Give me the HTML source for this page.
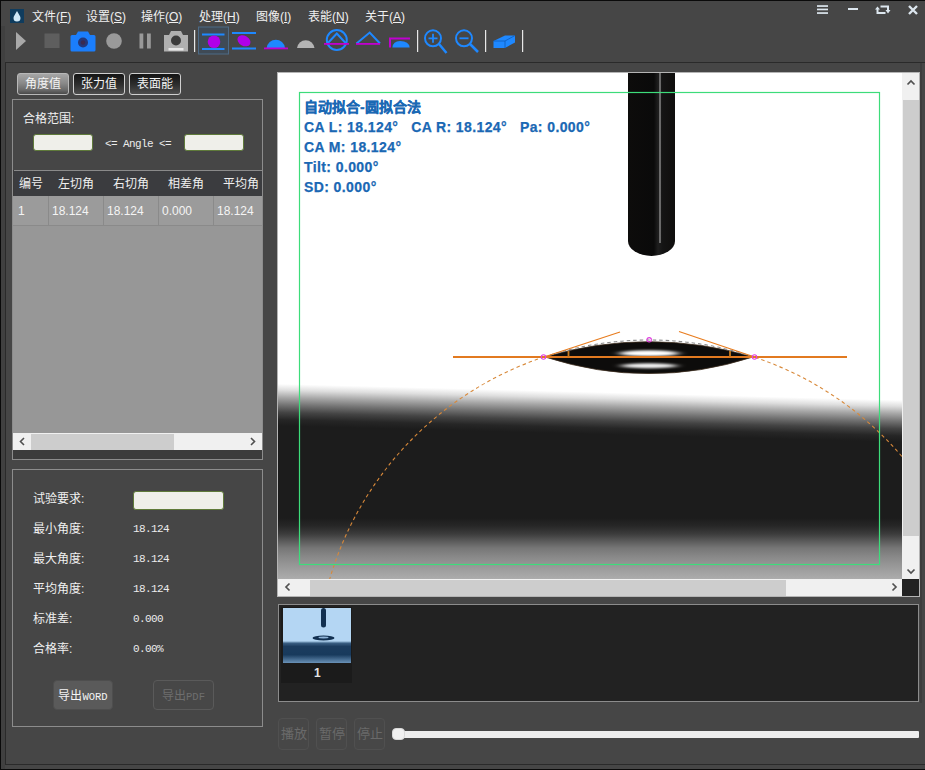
<!DOCTYPE html>
<html lang="zh-CN">
<head>
<meta charset="utf-8">
<style>
*{box-sizing:border-box;margin:0;padding:0}
html,body{width:925px;height:770px;overflow:hidden}
body{position:relative;background:#464646;font-family:"Liberation Sans",sans-serif;color:#e8e8e8;font-size:12px}
.a{position:absolute}
.menu{top:9px;height:16px;line-height:16px;font-size:12px;color:#f0f0f0;white-space:nowrap}
.menu u{text-decoration:underline;text-underline-offset:1px}
.gb{border:1px solid #8c8c8c}
.tab{height:22px;width:52px;border:1px solid #cfcfcf;border-radius:3px;font-size:12px;line-height:20px;text-align:center;color:#f4f4f4;background:linear-gradient(#141414,#2c2c2c 50%,#4e4e4e)}
.tab.sel{background:linear-gradient(#a6a6a6,#8a8a8a 45%,#6a6a6a 80%,#4a4a4a);border-color:#b8b8b8}
.inp{background:#efefea;border:1px solid #5f7a3a;border-radius:3px}
.mono{font-family:"Liberation Mono",monospace}
.lbl{font-size:12px;color:#f0f0f0;white-space:nowrap;line-height:16px}
.val{font-family:"Liberation Mono",monospace;font-size:11px;letter-spacing:-0.6px;color:#ececec;white-space:nowrap;line-height:16px}
.th{color:#f0f0f0;font-size:12px;line-height:25px;white-space:nowrap}
.td{color:#f4f4f4;font-size:12px;line-height:29px;white-space:nowrap}
.sb{background:#f0f0f0}
.thumbbar{background:#cdcdcd}
.ov{color:#1a68b4;font-weight:bold;font-size:14px;line-height:20px;white-space:pre;letter-spacing:0.4px;-webkit-text-stroke:0.25px #1a68b4}
.pbtn{width:31px;height:32px;border:1px solid #505050;border-radius:4px;color:#6a6a6a;font-size:13px;line-height:30px;text-align:center;background:#474747}
</style>
</head>
<body>
<!-- outer frame -->
<div class="a" style="left:0;top:0;width:925px;height:1px;background:#0a0a0a"></div>
<div class="a" style="left:0;top:0;width:1px;height:770px;background:#0a0a0a"></div>
<div class="a" style="left:1px;top:26px;width:4px;height:743px;background:#404040"></div>
<div class="a" style="left:0;top:769px;width:925px;height:1px;background:#0a0a0a"></div>

<!-- app icon -->
<div class="a" style="left:10px;top:9px;width:14px;height:14px;background:#0f3c5e"></div>
<svg class="a" style="left:10px;top:9px" width="14" height="14" viewBox="0 0 14 14"><path d="M7 2 C8.5 5 10.5 7 10.5 9 A3.5 3.5 0 0 1 3.5 9 C3.5 7 5.5 5 7 2Z" fill="#cfe8f8"/></svg>

<!-- menu -->
<div class="a menu" style="left:32px">文件(<u>F</u>)</div>
<div class="a menu" style="left:86px">设置(<u>S</u>)</div>
<div class="a menu" style="left:141px">操作(<u>O</u>)</div>
<div class="a menu" style="left:199px">处理(<u>H</u>)</div>
<div class="a menu" style="left:256px">图像(<u>I</u>)</div>
<div class="a menu" style="left:308px">表能(<u>N</u>)</div>
<div class="a menu" style="left:365px">关于(<u>A</u>)</div>

<!-- window buttons -->
<svg class="a" style="left:810px;top:0" width="115" height="22" viewBox="810 0 115 22">
  <g fill="#dce6ee">
    <rect x="817" y="5.2" width="11" height="1.7"/><rect x="817" y="8.6" width="11" height="1.7"/><rect x="817" y="12.2" width="11" height="1.7"/>
    <rect x="848" y="8" width="10" height="2"/>
  </g>
  <g stroke="#dce6ee" stroke-width="2" fill="none">
    <path d="M877.5 9 V13 H885.5"/><path d="M880.5 6.5 H888 V11"/>
  </g>
  <path d="M909 6 L917 14 M917 6 L909 14" stroke="#dce6ee" stroke-width="2.4"/>
  <path d="M875 9.5 L877.5 6.5 L880 9.5Z M885.5 10 L888 13.5 L890.5 10Z" fill="#dce6ee"/>
</svg>

<!-- toolbar -->
<svg class="a" style="left:0;top:26px" width="540" height="30" viewBox="0 26 540 30">
  <path d="M16 32 L26 41 L16 50Z" fill="#a8a8a8"/>
  <rect x="44.5" y="33.5" width="15" height="14.5" fill="#5e5e5e"/>
  <!-- blue camera -->
  <path d="M76 35 L78 31.5 H88 L90 35 H94 Q95.5 35 95.5 36.5 V50 Q95.5 51.5 94 51.5 H72 Q70.5 51.5 70.5 50 V36.5 Q70.5 35 72 35Z" fill="#1b7efc"/>
  <circle cx="83" cy="42.5" r="5" fill="#24387a"/>
  <circle cx="83" cy="42.5" r="2.2" fill="#3a2a50"/>
  <circle cx="106.5" cy="41" r="7.8" fill="#9a9a9a" transform="translate(7.5 0)"/>
  <rect x="139.5" y="33.5" width="3.8" height="15" fill="#999"/>
  <rect x="147" y="33.5" width="3.8" height="15" fill="#999"/>
  <!-- gray camera -->
  <path d="M169 35 L171 31 H181 L183 35 H188 V51.5 H164 V35Z" fill="#b0b0b0"/>
  <circle cx="176" cy="40.5" r="5" fill="#3c3c3c"/>
  <rect x="168.5" y="48" width="15" height="2.5" fill="#e8e8e8"/>
  <rect x="194" y="30" width="1.2" height="22" fill="#e8e8e8"/>
  <!-- selected frame -->
  <rect x="198.5" y="27" width="30" height="27" fill="#3f4a55" stroke="#4d6a86" stroke-width="1"/>
  <rect x="202" y="33.5" width="22.5" height="2" fill="#1e88ff"/>
  <rect x="202" y="48" width="22.5" height="2" fill="#1e88ff"/>
  <circle cx="214" cy="41.7" r="6.3" fill="#b000e8"/>
  <rect x="232" y="32" width="24" height="2" fill="#1e88ff"/>
  <rect x="232" y="47.5" width="24" height="2" fill="#1e88ff"/>
  <ellipse cx="244" cy="40.8" rx="7" ry="5" fill="#b000e8" transform="rotate(30 244 40.8)"/>
  <path d="M266.7 48 A9.2 9.2 0 0 1 285 48Z" fill="#1e88ff"/>
  <rect x="264" y="47.5" width="24" height="1.8" fill="#c000d0"/>
  <path d="M297 48 A8.8 8.8 0 0 1 314.5 48Z" fill="#b4b4b4"/>
  <!-- circle triangle -->
  <circle cx="336.8" cy="40" r="10" fill="none" stroke="#1e88ff" stroke-width="2"/>
  <path d="M327 44 L336.8 33.5 L346.5 44" fill="none" stroke="#1e88ff" stroke-width="2"/>
  <rect x="324" y="43" width="25" height="1.8" fill="#c000d0"/>
  <path d="M356.5 43.5 L369.7 32.5 L380 43.5" fill="none" stroke="#1e88ff" stroke-width="2"/>
  <rect x="356" y="43" width="24" height="1.8" fill="#c000d0"/>
  <path d="M389 38.4 H410 M390 38 V47.5" stroke="#c000d0" stroke-width="2" fill="none"/>
  <path d="M392.4 47.6 Q393 41 400 41 Q409 41 409.7 47.6Z" fill="#1e88ff"/>
  <rect x="417" y="30" width="1.2" height="22" fill="#e8e8e8"/>
  <!-- zoom in -->
  <circle cx="433" cy="38.3" r="8" fill="none" stroke="#1e88ff" stroke-width="2"/>
  <path d="M428.5 38.3 H437.5 M433 33.8 V42.8" stroke="#1e88ff" stroke-width="1.8"/>
  <path d="M439 44 L446.5 53" stroke="#1e88ff" stroke-width="2.5"/>
  <circle cx="464" cy="38.3" r="8" fill="none" stroke="#1e88ff" stroke-width="2"/>
  <path d="M459.5 38.3 H468.5" stroke="#1e88ff" stroke-width="1.8"/>
  <path d="M470 44 L478 52" stroke="#1e88ff" stroke-width="2.5"/>
  <rect x="485" y="30" width="1.2" height="22" fill="#e8e8e8"/>
  <path d="M493.5 41 L505 35.5 H515 V42.5 L505 48 H493.5Z" fill="#1e88ff"/>
  <path d="M493.5 41 H505 L515 35.5 M505 41 V48" stroke="#0e5ab8" stroke-width="0.8" fill="none"/>
  <rect x="522" y="30" width="1.2" height="22" fill="#e8e8e8"/>
</svg>

<!-- central frame lines -->
<div class="a" style="left:5px;top:62px;width:920px;height:1px;background:#2a2a2a"></div>
<div class="a" style="left:5px;top:62px;width:1px;height:703px;background:#2a2a2a"></div>
<div class="a" style="left:5px;top:764px;width:920px;height:1px;background:#2a2a2a"></div>
<div class="a" style="left:920px;top:63px;width:2px;height:640px;background:#3d3d3d"></div>

<!-- tabs -->
<div class="a tab sel" style="left:17px;top:73px">角度值</div>
<div class="a tab" style="left:73px;top:73px">张力值</div>
<div class="a tab" style="left:129px;top:73px">表面能</div>

<!-- group box 1 -->
<div class="a gb" style="left:12px;top:99px;width:251px;height:361px"></div>
<div class="a lbl" style="left:23px;top:111px">合格范围:</div>
<div class="a inp" style="left:33px;top:134px;width:60px;height:17px"></div>
<div class="a val" style="left:105px;top:136px">&lt;= Angle &lt;=</div>
<div class="a inp" style="left:184px;top:134px;width:60px;height:17px"></div>

<!-- table -->
<div class="a" style="left:13px;top:170px;width:249px;height:263px;background:#979797;overflow:hidden">
  <div class="a" style="left:0;top:0;width:249px;height:26px;background:#3b3c3f;border-top:1px solid #8a8a8a"></div>
  <div class="a" style="left:0;top:26px;width:249px;height:29px;background:#9b9b9b"></div>
  <div class="a th" style="left:6px;top:2px">编号</div>
  <div class="a th" style="left:45px;top:2px">左切角</div>
  <div class="a th" style="left:100px;top:2px">右切角</div>
  <div class="a th" style="left:155px;top:2px">相差角</div>
  <div class="a th" style="left:210px;top:2px">平均角</div>
  <div class="a td" style="left:5px;top:27px">1</div>
  <div class="a td" style="left:39px;top:27px">18.124</div>
  <div class="a td" style="left:94px;top:27px">18.124</div>
  <div class="a td" style="left:149px;top:27px">0.000</div>
  <div class="a td" style="left:204px;top:27px">18.124</div>
  <div class="a" style="left:35px;top:26px;width:1px;height:29px;background:#8a8a8a"></div>
  <div class="a" style="left:90px;top:26px;width:1px;height:29px;background:#8a8a8a"></div>
  <div class="a" style="left:145px;top:26px;width:1px;height:29px;background:#8a8a8a"></div>
  <div class="a" style="left:200px;top:26px;width:1px;height:29px;background:#8a8a8a"></div>
  <div class="a" style="left:0;top:55px;width:249px;height:1px;background:#8a8a8a"></div>
  <div class="a" style="left:0;top:0;width:1px;height:26px;background:#3a3a3a"></div>
</div>
<div class="a" style="left:13px;top:450px;width:249px;height:9px;background:#3c3c3c"></div>
<div class="a sb" style="left:13px;top:433px;width:249px;height:17px"></div>
<div class="a thumbbar" style="left:31px;top:434px;width:143px;height:16px"></div>
<svg class="a" style="left:13px;top:433px" width="249" height="17"><path d="M11 5 L7.5 8.5 L11 12" stroke="#505050" stroke-width="1.6" fill="none"/><path d="M238 5 L241.5 8.5 L238 12" stroke="#505050" stroke-width="1.6" fill="none"/></svg>

<!-- group box 2 -->
<div class="a gb" style="left:12px;top:469px;width:251px;height:258px"></div>
<div class="a lbl" style="left:33px;top:491px">试验要求:</div>
<div class="a inp" style="left:133px;top:491px;width:91px;height:19px"></div>
<div class="a lbl" style="left:33px;top:521px">最小角度:</div>
<div class="a val" style="left:133px;top:521px">18.124</div>
<div class="a lbl" style="left:33px;top:551px">最大角度:</div>
<div class="a val" style="left:133px;top:551px">18.124</div>
<div class="a lbl" style="left:33px;top:581px">平均角度:</div>
<div class="a val" style="left:133px;top:581px">18.124</div>
<div class="a lbl" style="left:33px;top:611px">标准差:</div>
<div class="a val" style="left:133px;top:611px">0.000</div>
<div class="a lbl" style="left:33px;top:641px">合格率:</div>
<div class="a val" style="left:133px;top:641px">0.00%</div>
<div class="a" style="left:53px;top:680px;width:60px;height:30px;border-radius:4px;background:#5a5a5a;border:1px solid #4e4e4e;color:#f4f4f4;font-size:12px;line-height:30px;text-align:center;white-space:nowrap">导出<span class="mono" style="font-size:10.5px">WORD</span></div>
<div class="a" style="left:153px;top:680px;width:61px;height:30px;border-radius:4px;background:#474747;border:1px solid #525252;color:#6e6e6e;font-size:12px;line-height:30px;text-align:center;white-space:nowrap;border-color:#5a5a5a">导出<span class="mono" style="font-size:10.5px">PDF</span></div>

<!-- image view -->
<div class="a" style="left:277px;top:72px;width:643px;height:525px;background:#b4b4b4"></div>
<div id="img" class="a" style="left:278px;top:73px;width:624px;height:506px;overflow:hidden;background:#fff">
<svg class="a" style="left:0;top:0" width="624" height="506" viewBox="278 73 624 506">
<defs>
  <filter id="blr" x="-50%" y="-100%" width="200%" height="300%"><feGaussianBlur stdDeviation="5 1.3"/></filter>
  <linearGradient id="gtop" gradientUnits="userSpaceOnUse" x1="0" y1="380" x2="0" y2="422">
    <stop offset="0" stop-color="#ffffff"/>
    <stop offset="0.15" stop-color="#dedede"/>
    <stop offset="0.32" stop-color="#a8a8a8"/>
    <stop offset="0.5" stop-color="#747474"/>
    <stop offset="0.68" stop-color="#444444"/>
    <stop offset="0.85" stop-color="#262626"/>
    <stop offset="1" stop-color="#1c1c1c"/>
  </linearGradient>
  <linearGradient id="gbot" gradientUnits="userSpaceOnUse" x1="0" y1="518" x2="0" y2="579">
    <stop offset="0" stop-color="#1c1c1c"/>
    <stop offset="0.131" stop-color="#272727"/>
    <stop offset="0.262" stop-color="#3c3c3c"/>
    <stop offset="0.377" stop-color="#5a5a5a"/>
    <stop offset="0.492" stop-color="#767676"/>
    <stop offset="0.623" stop-color="#878787"/>
    <stop offset="0.787" stop-color="#989898"/>
    <stop offset="1" stop-color="#acacac"/>
  </linearGradient>
  <radialGradient id="hl1" cx="0.5" cy="0.5" r="0.5">
    <stop offset="0" stop-color="#ffffff"/>
    <stop offset="0.5" stop-color="#e8e8e8" stop-opacity="0.8"/>
    <stop offset="1" stop-color="#ffffff" stop-opacity="0"/>
  </radialGradient>
  <linearGradient id="needle" x1="0" y1="0" x2="1" y2="0">
    <stop offset="0" stop-color="#0d0c0b"/>
    <stop offset="0.55" stop-color="#0a0a0a"/>
    <stop offset="0.64" stop-color="#1e1e1e"/>
    <stop offset="0.74" stop-color="#141414"/>
    <stop offset="1" stop-color="#0f0e0d"/>
  </linearGradient>
</defs>
<rect x="278" y="73" width="624" height="506" fill="#1c1c1c"/>
<g transform="skewY(1.5) translate(0 -3.5)">
  <rect x="270" y="0" width="640" height="440" fill="url(#gtop)"/>
</g>
<rect x="278" y="518" width="624" height="61" fill="url(#gbot)"/>
<!-- needle -->
<path d="M628 60 V241 A23.5 15 0 0 0 675 241 V60Z" fill="url(#needle)"/>
<rect x="659" y="73" width="2" height="170" fill="#a0a0a0" opacity="0.6"/>
<!-- drop -->
<path d="M545 357 A361 361 0 0 1 753 357 Q700 374 649 373.5 Q598 374 545 357Z" fill="#0d0c0b" stroke="#3a2a1a" stroke-width="0.8"/>
<g filter="url(#blr)">
<ellipse cx="649" cy="353.3" rx="30" ry="3" fill="#fff"/>
<ellipse cx="649" cy="365.8" rx="28" ry="2.5" fill="#f0f0f0"/>
</g>
<!-- fitted circle dashed -->
<path d="M544 357 A332.8 332.8 0 1 0 754 357" fill="none" stroke="#d8893a" stroke-width="1.1" stroke-dasharray="3.5 3"/>
<path d="M544 357 A332.8 332.8 0 0 1 754 357" fill="none" stroke="#8a8a8a" stroke-width="1.1" stroke-dasharray="3.5 3"/>
<!-- baseline and tangents -->
<path d="M453 357 H847" stroke="#e27a20" stroke-width="1.8"/>
<path d="M544 357 L620 332" stroke="#e87c1e" stroke-width="1.2"/>
<path d="M754.5 357 L679 331.5" stroke="#e87c1e" stroke-width="1.2"/>
<path d="M568.5 351 V357 M730 351 V357" stroke="#c87a20" stroke-width="1.8"/>
<g fill="none" stroke="#e040e0" stroke-width="1.1">
<circle cx="543.5" cy="357" r="2.2"/><circle cx="754.5" cy="357" r="2.2"/><circle cx="649.2" cy="339.8" r="2.2"/>
</g>
<!-- green rect -->
<rect x="299.5" y="92.5" width="580" height="472" fill="none" stroke="#3ddc7a" stroke-width="1.2"/>
</svg>
<div class="a ov" style="left:26px;top:24px;letter-spacing:0">自动拟合-圆拟合法</div>
<div class="a ov" style="left:26px;top:44px">CA L: 18.124°   CA R: 18.124°   Pa: 0.000°</div>
<div class="a ov" style="left:26px;top:64px">CA M: 18.124°</div>
<div class="a ov" style="left:26px;top:84px">Tilt: 0.000°</div>
<div class="a ov" style="left:26px;top:104px">SD: 0.000°</div>
</div>
<div class="a sb" style="left:902px;top:73px;width:17px;height:506px"></div>
<div class="a thumbbar" style="left:903px;top:100px;width:16px;height:436px"></div>
<div class="a sb" style="left:278px;top:579px;width:624px;height:17px"></div>
<div class="a thumbbar" style="left:310px;top:580px;width:476px;height:16px"></div>
<div class="a" style="left:902px;top:579px;width:17px;height:17px;background:#222"></div>
<svg class="a" style="left:277px;top:72px" width="643" height="525" viewBox="277 72 643 525">
<g stroke="#505050" stroke-width="1.7" fill="none">
<path d="M907.5 84.5 L911 81 L914.5 84.5"/>
<path d="M907.5 569.5 L911 573 L914.5 569.5"/>
<path d="M289.5 583.5 L286 587 L289.5 590.5"/>
<path d="M892.5 583.5 L896 587 L892.5 590.5"/>
</g></svg>

<!-- thumbnails -->
<div class="a" style="left:278px;top:604px;width:641px;height:98px;background:#222;border:1px solid #8c8c8c"></div>
<div class="a" style="left:281px;top:607px;width:71px;height:76px;background:#1b1b1b"></div>
<svg class="a" style="left:283px;top:608px" width="68" height="55" viewBox="0 0 68 55">
<defs><linearGradient id="tg" x1="0" y1="0" x2="0" y2="1">
<stop offset="0" stop-color="#b4d6f3"/><stop offset="0.6" stop-color="#b4d6f3"/><stop offset="0.64" stop-color="#3a5e82"/><stop offset="0.7" stop-color="#1c3c5e"/><stop offset="0.85" stop-color="#183a5c"/><stop offset="1" stop-color="#6a92b8"/></linearGradient></defs>
<rect width="68" height="55" fill="url(#tg)"/>
<rect x="38" y="0" width="5" height="19.5" rx="2.5" fill="#123050"/>
<ellipse cx="40.5" cy="30" rx="11" ry="2.6" fill="#123050"/>
<ellipse cx="40.5" cy="29.5" rx="5" ry="0.9" fill="#8fb4d8"/>
</svg>
<div class="a" style="left:314px;top:666px;font-size:12px;line-height:14px;color:#e4e4e4;font-weight:bold">1</div>

<!-- playback -->
<div class="a pbtn" style="left:278px;top:718px">播放</div>
<div class="a pbtn" style="left:316px;top:718px">暂停</div>
<div class="a pbtn" style="left:354px;top:718px">停止</div>
<div class="a" style="left:398px;top:731px;width:521px;height:7px;background:#ededed;border-radius:1px"></div>
<div class="a" style="left:392px;top:728px;width:13px;height:12px;background:#f0f0f0;border-radius:4px;border:1px solid #d8d8d8"></div>
</body>
</html>
